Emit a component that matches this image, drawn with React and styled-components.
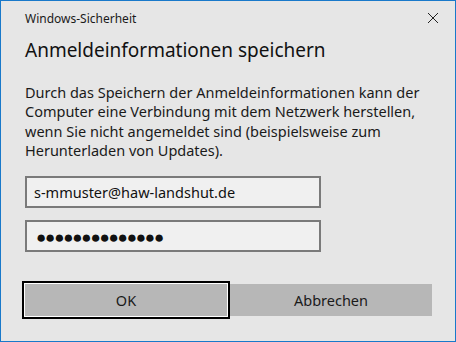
import styled, { createGlobalStyle } from "styled-components";

const Global = createGlobalStyle`
  html, body {
    margin: 0;
    padding: 0;
    background: #e6e6e6;
  }
  * {
    box-sizing: border-box;
  }
`;

const Window = styled.div`
  width: 456px;
  height: 342px;
  border: 1px solid #1979ca;
  background: #e6e6e6;
  font-family: "Noto Sans", "Open Sans", sans-serif;
  color: #1a1a1a;
  display: flex;
  flex-direction: column;
  padding: 0 0 0 24px;
`;

const TitleBar = styled.div`
  height: 34px;
  display: flex;
  align-items: center;
  justify-content: space-between;
  padding-right: 16px;
`;

const Caption = styled.span`
  font-size: 12px;
  color: #1a1a1a;
`;

const Close = styled.button`
  width: 12px;
  height: 12px;
  padding: 0;
  border: none;
  background: none;
  display: flex;
`;

const Heading = styled.h1`
  margin: 1px 0 0;
  font-size: 19px;
  font-weight: normal;
  line-height: 28px;
  color: #111;
`;

const Message = styled.p`
  margin: 19px 0 0;
  font-size: 14.5px;
  line-height: 19.3px;
  color: #1a1a1a;
  width: 400px;
`;

const Fields = styled.div`
  margin-top: 16px;
  display: flex;
  flex-direction: column;
  gap: 12px;
`;

const Field = styled.div`
  width: 296px;
  height: 32px;
  border: 2px solid #7a7a7a;
  background: #f0f0f0;
  display: flex;
  align-items: center;
  padding: 0 0 0 ${(p) => (p.$masked ? 9 : 7)}px;
  font-size: ${(p) => (p.$masked ? 17 : 14.5)}px;
  letter-spacing: ${(p) => (p.$masked ? "-1.2px" : "0")};
  color: #111;
`;

const Actions = styled.div`
  margin-top: 32px;
  display: flex;
  gap: 3px;
`;

const Button = styled.button`
  width: 202px;
  height: 32px;
  border: none;
  background: #b7b7b7;
  font-family: inherit;
  font-size: 14.5px;
  color: #1a1a1a;
  padding: 0;
  outline: ${(p) => (p.$focused ? "2px solid #000" : "none")};
  outline-offset: 1px;
  box-shadow: ${(p) => (p.$focused ? "0 0 0 1px #fff" : "none")};
`;

export default function App() {
  return (
    <>
      <Global />
      <Window>
        <TitleBar>
          <Caption>Windows-Sicherheit</Caption>
          <Close aria-label="Schließen">
            <svg width="12" height="12" viewBox="0 0 12 12">
              <path d="M1 1 L11 11 M11 1 L1 11" stroke="#222" strokeWidth="1" />
            </svg>
          </Close>
        </TitleBar>
        <Heading>Anmeldeinformationen speichern</Heading>
        <Message>
          Durch das Speichern der Anmeldeinformationen kann der Computer eine
          Verbindung mit dem Netzwerk herstellen, wenn Sie nicht angemeldet
          sind (beispielsweise zum Herunterladen von Updates).
        </Message>
        <Fields>
          <Field>s-mmuster@haw-landshut.de</Field>
          <Field $masked>{"\u25CF".repeat(14)}</Field>
        </Fields>
        <Actions>
          <Button $focused>OK</Button>
          <Button>Abbrechen</Button>
        </Actions>
      </Window>
    </>
  );
}
